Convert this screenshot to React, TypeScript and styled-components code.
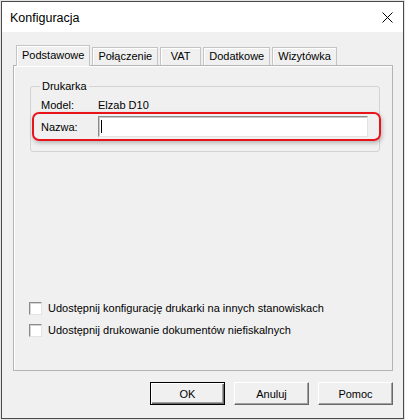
import React from "react";
import styled, { createGlobalStyle } from "styled-components";

const GlobalStyle = createGlobalStyle`
  html, body {
    margin: 0;
    padding: 0;
    background: #e4e4e4;
  }
  body {
    font-family: "Liberation Sans", Arial, sans-serif;
    font-size: 11px;
    color: #000;
  }
`;

const Window = styled.div`
  box-sizing: border-box;
  margin: 1px;
  width: 403px;
  height: 418px;
  border: 1px solid #4a4a4a;
  background: #f0f0f0;
  display: flex;
  flex-direction: column;
`;

const TitleBar = styled.div`
  flex-shrink: 0;
  height: 30px;
  background: #fff;
  display: flex;
  align-items: center;
  padding: 0 10px 0 8px;
`;

const Title = styled.span`
  font-size: 12.5px;
  margin-top: 1px;
`;

const CloseIcon = styled.svg`
  margin-left: auto;
  margin-top: 1px;
`;

const Body = styled.div`
  flex: 1;
  display: flex;
  flex-direction: column;
  padding: 13px 10px 13px 11px;
`;

const TabStrip = styled.div`
  height: 20px;
  display: flex;
  align-items: flex-end;
  gap: 2px;
  padding-left: 3px;
`;

// Windows-style tab; the active one stands 3px taller and covers the panel edge
const Tab = styled.div<{ $active?: boolean }>`
  box-sizing: border-box;
  position: relative;
  z-index: ${(p) => (p.$active ? 1 : 0)};
  height: ${(p) => (p.$active ? "21px" : "18px")};
  margin-bottom: ${(p) => (p.$active ? "-1px" : "0")};
  min-width: 41px;
  padding: 0 5px;
  border: 1px solid #c4c4c4;
  border-bottom: none;
  box-shadow: inset 1px 1px 0 #fff;
  background: #f0f0f0;
  line-height: ${(p) => (p.$active ? "19px" : "17px")};
  text-align: center;
  white-space: nowrap;
`;

const Panel = styled.div`
  box-sizing: border-box;
  height: 306px;
  border: 1px solid #b4b4b4;
  box-shadow: inset 1px 1px 0 #fff;
  display: flex;
  flex-direction: column;
  padding: 14px 12px 29px 16px;
`;

const Group = styled.fieldset`
  margin: 0;
  border: 1px solid #d3d3d3;
  border-radius: 3px;
  padding: 0 10px 10px 10px;
`;

const Legend = styled.legend`
  padding: 0 2px;
  margin-left: -1px;
  line-height: 13px;
`;

const FieldRow = styled.div`
  display: flex;
  align-items: center;
  margin-top: 6px;
  line-height: 13px;
`;

const Label = styled.span`
  width: 57px;
  flex-shrink: 0;
`;

// red annotation frame around the "Nazwa" row
const Highlight = styled.div`
  display: flex;
  align-items: center;
  margin: 0 -12px 0 -9px;
  padding: 2px 11px 2px 7px;
  border: 2px solid #e8141c;
  border-radius: 7px;
  box-shadow: 1px 2px 4px rgba(0, 0, 0, 0.25);
`;

const TextBox = styled.div`
  box-sizing: border-box;
  flex: 1;
  height: 21px;
  background: #fff;
  border: 1px solid;
  border-color: #8c8c8c #e3e3e3 #e3e3e3 #8c8c8c;
  box-shadow: inset 1px 1px 0 #c8c8c8;
  display: flex;
  align-items: center;
  padding: 0 2px;
`;

const Caret = styled.span`
  width: 1px;
  height: 13px;
  background: #000;
`;

const Options = styled.div`
  margin-top: auto;
  margin-left: -1px;
  display: flex;
  flex-direction: column;
`;

const CheckRow = styled.label`
  height: 22px;
  display: flex;
  align-items: center;
  gap: 6px;
`;

const CheckBox = styled.span`
  box-sizing: border-box;
  width: 13px;
  height: 13px;
  background: #fff;
  border: 1px solid;
  border-color: #8a8a8a #e3e3e3 #e3e3e3 #8a8a8a;
  box-shadow: inset 1px 1px 0 #d4d4d4;
`;

const Buttons = styled.div`
  display: flex;
  justify-content: flex-end;
  gap: 9px;
  margin-top: 11px;
`;

const Button = styled.button<{ $default?: boolean }>`
  box-sizing: border-box;
  width: 75px;
  height: 23px;
  padding: 0;
  font: inherit;
  color: #000;
  background: #f0f0f0;
  border: 1px solid;
  border-color: ${(p) =>
    p.$default ? "#000" : "#fff #696969 #696969 #fff"};
  box-shadow: ${(p) =>
    p.$default
      ? "inset 1px 1px 0 #fff, inset -1px -1px 0 #696969, inset -2px -2px 0 #a0a0a0"
      : "inset -1px -1px 0 #a0a0a0"};
`;

const tabs = ["Podstawowe", "Połączenie", "VAT", "Dodatkowe", "Wizytówka"];

export default function App() {
  return (
    <>
      <GlobalStyle />
      <Window>
        <TitleBar>
          <Title>Konfiguracja</Title>
          <CloseIcon width="11" height="11" viewBox="0 0 11 11">
            <path d="M0.5 0.5 L10.5 10.5 M10.5 0.5 L0.5 10.5" stroke="#000" strokeWidth="1" />
          </CloseIcon>
        </TitleBar>
        <Body>
          <TabStrip>
            {tabs.map((t, i) => (
              <Tab key={t} $active={i === 0}>
                {t}
              </Tab>
            ))}
          </TabStrip>
          <Panel>
            <Group>
              <Legend>Drukarka</Legend>
              <FieldRow>
                <Label>Model:</Label>
                <span>Elzab D10</span>
              </FieldRow>
              <Highlight>
                <Label>Nazwa:</Label>
                <TextBox>
                  <Caret />
                </TextBox>
              </Highlight>
            </Group>
            <Options>
              <CheckRow>
                <CheckBox />
                Udostępnij konfigurację drukarki na innych stanowiskach
              </CheckRow>
              <CheckRow>
                <CheckBox />
                Udostępnij drukowanie dokumentów niefiskalnych
              </CheckRow>
            </Options>
          </Panel>
          <Buttons>
            <Button $default>OK</Button>
            <Button>Anuluj</Button>
            <Button>Pomoc</Button>
          </Buttons>
        </Body>
      </Window>
    </>
  );
}
